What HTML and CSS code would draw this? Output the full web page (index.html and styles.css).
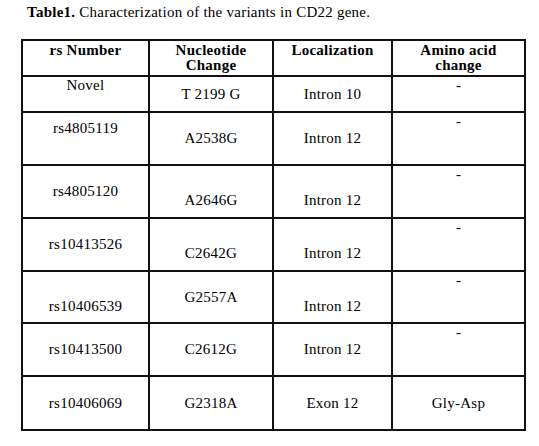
FILE: index.html
```html
<!DOCTYPE html>
<html>
<head>
<meta charset="utf-8">
<link rel="stylesheet" href="styles.css">
</head>
<body>
<div class="page">
  <p class="title"><b>Table1.</b> Characterization of the variants in CD22 gene.</p>
  <div class="grid">
    <div class="cell head">rs Number</div>
    <div class="cell head">Nucleotide<br>Change</div>
    <div class="cell head">Localization</div>
    <div class="cell head">Amino acid<br>change</div>

    <div class="cell top">Novel</div>
    <div class="cell mid">T 2199 G</div>
    <div class="cell mid">Intron 10</div>
    <div class="cell top">-</div>

    <div class="cell top-pad">rs4805119</div>
    <div class="cell mid">A2538G</div>
    <div class="cell mid">Intron 12</div>
    <div class="cell top">-</div>

    <div class="cell mid">rs4805120</div>
    <div class="cell low">A2646G</div>
    <div class="cell low">Intron 12</div>
    <div class="cell top">-</div>

    <div class="cell mid">rs10413526</div>
    <div class="cell low">C2642G</div>
    <div class="cell low">Intron 12</div>
    <div class="cell top">-</div>

    <div class="cell low">rs10406539</div>
    <div class="cell mid">G2557A</div>
    <div class="cell low">Intron 12</div>
    <div class="cell top">-</div>

    <div class="cell mid">rs10413500</div>
    <div class="cell mid">C2612G</div>
    <div class="cell mid">Intron 12</div>
    <div class="cell top">-</div>

    <div class="cell mid">rs10406069</div>
    <div class="cell mid">G2318A</div>
    <div class="cell mid">Exon 12</div>
    <div class="cell mid">Gly-Asp</div>
  </div>
</div>
</body>
</html>
```

FILE: styles.css
```css
html, body {
  margin: 0;
  padding: 0;
  background: #fff;
}

body {
  font-family: "Liberation Serif", "Times New Roman", serif;
  font-size: 15px;
  line-height: 15px;
  letter-spacing: 0.25px;
  color: #000;
}

.page {
  padding: 5px 0 0 21px;
}

.title {
  margin: 0 0 19px 6px;
  line-height: 15px;
}

.grid {
  display: grid;
  grid-template-columns: 125px 122px 117px 131px;
  grid-template-rows: 34px 34px 51px 51px 51px 50px 51px 52px;
  gap: 2px;
  padding: 2px;
  width: max-content;
  background: #111;
}

.cell {
  background: #fff;
  display: flex;
  flex-direction: column;
  align-items: center;
  text-align: center;
}

.head {
  font-weight: bold;
  justify-content: flex-start;
  padding-top: 2px;
}

.top {
  justify-content: flex-start;
  padding-top: 1px;
}

.top-pad {
  justify-content: flex-start;
  padding-top: 8px;
}

.mid {
  justify-content: center;
}

.low {
  justify-content: center;
  padding-top: 18px;
}
```
